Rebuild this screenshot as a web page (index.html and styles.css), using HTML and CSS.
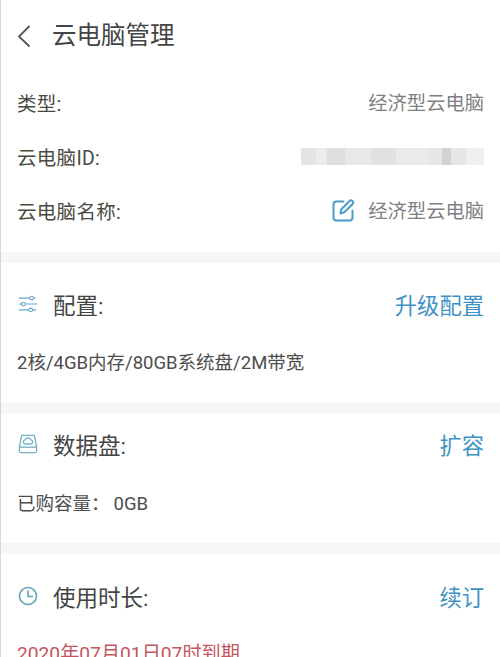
FILE: index.html
```html
<!DOCTYPE html>
<html lang="zh-CN">
<head>
<meta charset="utf-8">
<title>云电脑管理</title>
<link rel="stylesheet" href="styles.css">
</head>
<body>
<div class="page">
  <header class="top">
    <svg class="back" viewBox="0 0 14 24" width="14" height="24"><path d="M12.5 2 L2 12.5 L12.5 22.5" fill="none" stroke="#555" stroke-width="1.8"/></svg>
    <h1 class="title">云电脑管理</h1>
  </header>
  <section class="info">
    <div class="row"><span class="label">类型:</span><span class="value">经济型云电脑</span></div>
    <div class="row"><span class="label">云电脑ID:</span><span class="mosaic"></span></div>
    <div class="row"><span class="label">云电脑名称:</span>
      <span class="value-wrap">
        <svg class="edit" viewBox="0 0 24 24" width="24" height="24"><path d="M12.5 3.5H5.5a3 3 0 0 0-3 3v13a3 3 0 0 0 3 3h13a3 3 0 0 0 3-3v-7" fill="none" stroke="#4a9ccb" stroke-width="2" stroke-linecap="round"/><path d="M9.5 15.5l.8-4.2L18.6 3a2 2 0 0 1 2.8 0l.2.2a2 2 0 0 1 0 2.8l-8.3 8.3z" fill="none" stroke="#4a9ccb" stroke-width="2" stroke-linejoin="round"/></svg>
        <span class="value">经济型云电脑</span>
      </span>
    </div>
  </section>
  <div class="band"></div>
  <section class="card config">
    <div class="head">
      <span class="head-left">
        <svg class="icon" viewBox="0 0 22 20" width="20" height="20"><g fill="none" stroke="#62a8c8" stroke-width="1.2"><path d="M1 3.5h12M17 3.5h2"/><circle cx="15" cy="3.5" r="2"/><path d="M1 10h3M8 10h13"/><circle cx="6" cy="10" r="2"/><path d="M1 16.5h11M16 16.5h4"/><circle cx="14" cy="16.5" r="2"/></g></svg>
        <span class="head-title">配置:</span>
      </span>
      <span class="action">升级配置</span>
    </div>
    <p class="detail">2核/4GB内存/80GB系统盘/2M带宽</p>
  </section>
  <div class="band"></div>
  <section class="card disk">
    <div class="head">
      <span class="head-left">
        <svg class="icon" viewBox="0 0 22 22" width="20" height="20"><g fill="none" stroke="#6fb0c4" stroke-width="1.4" stroke-linejoin="round"><path d="M4 1.5h14l2.5 13v4a2 2 0 0 1-2 2h-15a2 2 0 0 1-2-2v-4z"/><path d="M1.5 14.5h19"/><path d="M7.5 11a2.4 2.4 0 0 1 .3-4.6 3.4 3.4 0 0 1 6.4 0 2.4 2.4 0 0 1 .3 4.6z"/></g></svg>
        <span class="head-title">数据盘:</span>
      </span>
      <span class="action">扩容</span>
    </div>
    <p class="detail">已购容量：<span class="amount">0GB</span></p>
  </section>
  <div class="band"></div>
  <section class="card time">
    <div class="head">
      <span class="head-left">
        <svg class="icon" viewBox="0 0 20 20" width="20" height="20"><g fill="none" stroke="#5fa3b5" stroke-width="1.6"><circle cx="10" cy="10" r="8.5"/><path d="M10 4.5v6h5"/></g></svg>
        <span class="head-title">使用时长:</span>
      </span>
      <span class="action">续订</span>
    </div>
    <p class="detail due">2020年07月01日07时到期</p>
  </section>
</div>
</body>
</html>
```
FILE: styles.css
```css
html, body { margin: 0; padding: 0; height: 100%; overflow: hidden; background: #fff; }
.page {
  box-sizing: border-box;
  width: 500px;
  height: 657px;
  overflow: hidden;
  border-left: 1px solid #d6d6d6;
  font-family: Roboto, "Noto Sans CJK SC", sans-serif;
  color: #444;
}
.top { box-sizing: border-box; display: flex; align-items: center; height: 70px; padding: 2px 0 0 16px; }
.back { margin-right: 21px; }
.title { margin: 0; font-size: 24.5px; font-weight: 400; color: #444; line-height: 68px; }
.info { box-sizing: border-box; height: 182px; padding-top: 5px; display: flex; flex-direction: column; }
.row { display: flex; justify-content: space-between; align-items: center; flex: none; height: 54px; padding: 0 16px 0 16px; font-size: 19.5px; }
.label { color: #4a4a3f; letter-spacing: 0.3px; }
.value { color: #808080; font-size: 19.3px; }
.value-wrap { display: flex; align-items: center; gap: 13px; }
.mosaic {
  width: 183px;
  height: 17px;
  margin-top: 1px;
  filter: blur(0.7px);
  background: linear-gradient(90deg, #e4e4e4 0 8%, #ececec 8% 14%, #dedede 14% 24%, #e8e8e8 24% 38%, #e2e2e2 38% 52%, #eaeaea 52% 70%, #e6e6e6 70% 77%, #d2d2d2 77% 82%, #e6e6e6 82% 90%, #f0f0f0 90% 100%);
}
.band { height: 11px; background: #f6f6f6; }
.card { padding: 0 16px; }
.config { height: 140px; }
.disk { height: 129px; }
.time { height: 120px; }
.head { display: flex; justify-content: space-between; align-items: center; }
.config .head { height: 82px; }
.disk .head { height: 60px; }
.time .head { height: 84px; }
.head-left { display: flex; align-items: center; gap: 15px; }
.icon { flex: none; margin-left: 1px; }
.head-title { font-size: 22.5px; color: #444; }
.action { font-size: 22.3px; color: #3f93c4; }
.detail { margin: 6px 0 0; font-size: 18.5px; line-height: 24px; color: #4d4d4d; }
.disk .detail { margin-top: 18px; }
.amount { margin-left: 4px; }
.time .detail { margin-top: 4px; }
.due { color: #c4555f; font-size: 19.2px; }
```
